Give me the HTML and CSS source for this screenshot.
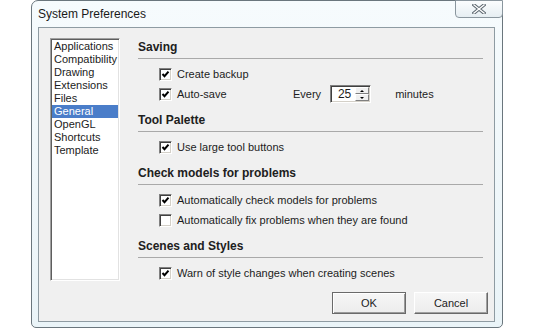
FILE: index.html
```html
<html>
<head>
<link rel="stylesheet" href="styles.css">
</head>
<body>
<div class="window">
	<div class="titlebar">
		<span class="title">System Preferences</span>
		<span class="close">
			<svg width="14" height="10" viewBox="0 0 14 10">
				<path d="M2 1 L12 9 M12 1 L2 9" stroke="#5d6870" stroke-width="3.4" stroke-linecap="square"/>
				<path d="M2 1 L12 9 M12 1 L2 9" stroke="#ffffff" stroke-width="1.4" stroke-linecap="square"/>
			</svg>
		</span>
	</div>
	<div class="client">
		<div class="main">
			<ul class="list">
				<li>Applications</li>
				<li>Compatibility</li>
				<li>Drawing</li>
				<li>Extensions</li>
				<li>Files</li>
				<li class="selected">General</li>
				<li>OpenGL</li>
				<li>Shortcuts</li>
				<li>Template</li>
			</ul>
			<div class="settings">
				<div class="group">
					<h2>Saving</h2>
					<div class="row"><span class="check on"></span><span class="label">Create backup</span></div>
					<div class="row">
						<span class="check on"></span><span class="label fixed">Auto-save</span>
						<span class="label">Every</span>
						<span class="spinner">
							<span class="value">25</span>
							<span class="arrows">
								<span class="arrow"><i class="up"></i></span>
								<span class="arrow"><i class="down"></i></span>
							</span>
						</span>
						<span class="label unit">minutes</span>
					</div>
				</div>
				<div class="group">
					<h2>Tool Palette</h2>
					<div class="row"><span class="check on"></span><span class="label">Use large tool buttons</span></div>
				</div>
				<div class="group">
					<h2>Check models for problems</h2>
					<div class="row"><span class="check on"></span><span class="label">Automatically check models for problems</span></div>
					<div class="row"><span class="check"></span><span class="label">Automatically fix problems when they are found</span></div>
				</div>
				<div class="group">
					<h2>Scenes and Styles</h2>
					<div class="row"><span class="check on"></span><span class="label">Warn of style changes when creating scenes</span></div>
				</div>
			</div>
		</div>
		<div class="buttons">
			<span class="btn default">OK</span>
			<span class="btn">Cancel</span>
		</div>
	</div>
</div>
</body>
</html>
```

FILE: styles.css
```css
body {
    margin: 0;
    background: #ffffff;
    font-family: "Liberation Sans", Arial, sans-serif;
    font-size: 11px;
    color: #1c1c1c;
}

.window {
    box-sizing: border-box;
    margin-left: 31px;
    width: 472px;
    height: 328px;
    border: 1px solid #6a767d;
    border-radius: 7px 7px 5px 5px;
    background: linear-gradient(#f6fbfd, #eaf4f8);
    display: flex;
    flex-direction: column;
}

.titlebar {
    height: 26px;
    display: flex;
    align-items: center;
    justify-content: space-between;
}

.title {
    font-size: 12px;
    padding-left: 6px;
    color: #1a1a1a;
}

.close {
    align-self: flex-start;
    box-sizing: border-box;
    margin-top: -1px;
    margin-right: -1px;
    width: 48px;
    height: 18px;
    border: 1px solid #8a969e;
    border-radius: 0 0 4px 4px;
    background: linear-gradient(#fbfdfe, #e6eef2);
    display: flex;
    align-items: center;
    justify-content: center;
}

.client {
    box-sizing: border-box;
    margin-left: 6px;
    width: 457px;
    height: 295px;
    border: 1px solid #8e9ba2;
    background: #f0f0f0;
    display: flex;
    flex-direction: column;
}

.main {
    display: flex;
    align-items: flex-start;
    padding: 8px 11px 0 11px;
    gap: 18px;
}

.list {
    box-sizing: border-box;
    margin: 2px 0 0 0;
    padding: 0;
    list-style: none;
    width: 70px;
    height: 243px;
    background: #ffffff;
    border: 1px solid;
    border-color: #a0a0a0 #ffffff #ffffff #a0a0a0;
    box-shadow: inset 1px 1px 0 #5e5e5e, inset -1px -1px 0 #e2e2e2;
    padding: 1px 1px 0 1px;
}

.list li {
    height: 13px;
    line-height: 13px;
    padding-left: 2px;
    white-space: nowrap;
}

.list li.selected {
    background: #4a7dc9;
    color: #ffffff;
}

.settings {
    width: 345px;
}

.group + .group {
    margin-top: 5px;
}

.group h2 {
    margin: 0;
    height: 22px;
    line-height: 22px;
    font-size: 12px;
    font-weight: bold;
    color: #202020;
    border-bottom: 1px solid #a9a9a9;
}

.group h2 + .row {
    margin-top: 5px;
}

.row {
    height: 20px;
    display: flex;
    align-items: center;
    padding-left: 21px;
}

.check {
    box-sizing: border-box;
    width: 13px;
    height: 13px;
    margin-right: 5px;
    background: #ffffff;
    border: 1px solid;
    border-color: #808080 #ffffff #ffffff #808080;
    box-shadow: inset 1px 1px 0 #404040, inset -1px -1px 0 #d4d0c8;
}

.check.on {
    background: #ffffff url("data:image/svg+xml;utf8,<svg xmlns='http://www.w3.org/2000/svg' width='11' height='11'><path d='M2.5 5 L4.5 7.2 L8.5 2.6' fill='none' stroke='black' stroke-width='2'/></svg>") no-repeat 0 0;
}

.label {
    white-space: nowrap;
}

.label.fixed {
    width: 116px;
}

.spinner {
    box-sizing: border-box;
    margin-left: 9px;
    width: 41px;
    height: 18px;
    display: flex;
    background: #ffffff;
    border: 1px solid;
    border-color: #808080 #ffffff #ffffff #808080;
    box-shadow: inset 1px 1px 0 #404040, inset -1px -1px 0 #d4d0c8;
    padding: 1px;
}

.spinner .value {
    flex: 1;
    text-align: center;
    line-height: 14px;
    font-size: 12px;
    padding-left: 2px;
}

.arrows {
    width: 14px;
    display: flex;
    flex-direction: column;
}

.arrow {
    flex: 1;
    box-sizing: border-box;
    background: #f0f0f0;
    border: 1px solid;
    border-color: #ffffff #808080 #808080 #ffffff;
    display: flex;
    align-items: center;
    justify-content: center;
}

.arrow i {
    width: 0;
    height: 0;
    border-left: 2px solid transparent;
    border-right: 2px solid transparent;
}

.arrow i.up {
    border-bottom: 2px solid #000000;
}

.arrow i.down {
    border-top: 2px solid #000000;
}

.label.unit {
    margin-left: 24px;
}

.buttons {
    margin-top: auto;
    display: flex;
    justify-content: flex-end;
    gap: 8px;
    padding: 0 6px 7px 0;
}

.btn {
    box-sizing: border-box;
    width: 74px;
    height: 22px;
    display: flex;
    align-items: center;
    justify-content: center;
    background: linear-gradient(#f6f6f6, #ececec);
    border: 1px solid;
    border-color: #ffffff #696969 #696969 #ffffff;
    box-shadow: inset -1px -1px 0 #a0a0a0;
    font-size: 11px;
}

.btn.default {
    border-color: #6a6a6a;
    box-shadow: inset 1px 1px 0 #ffffff, inset -1px -1px 0 #9a9a9a;
}
```
